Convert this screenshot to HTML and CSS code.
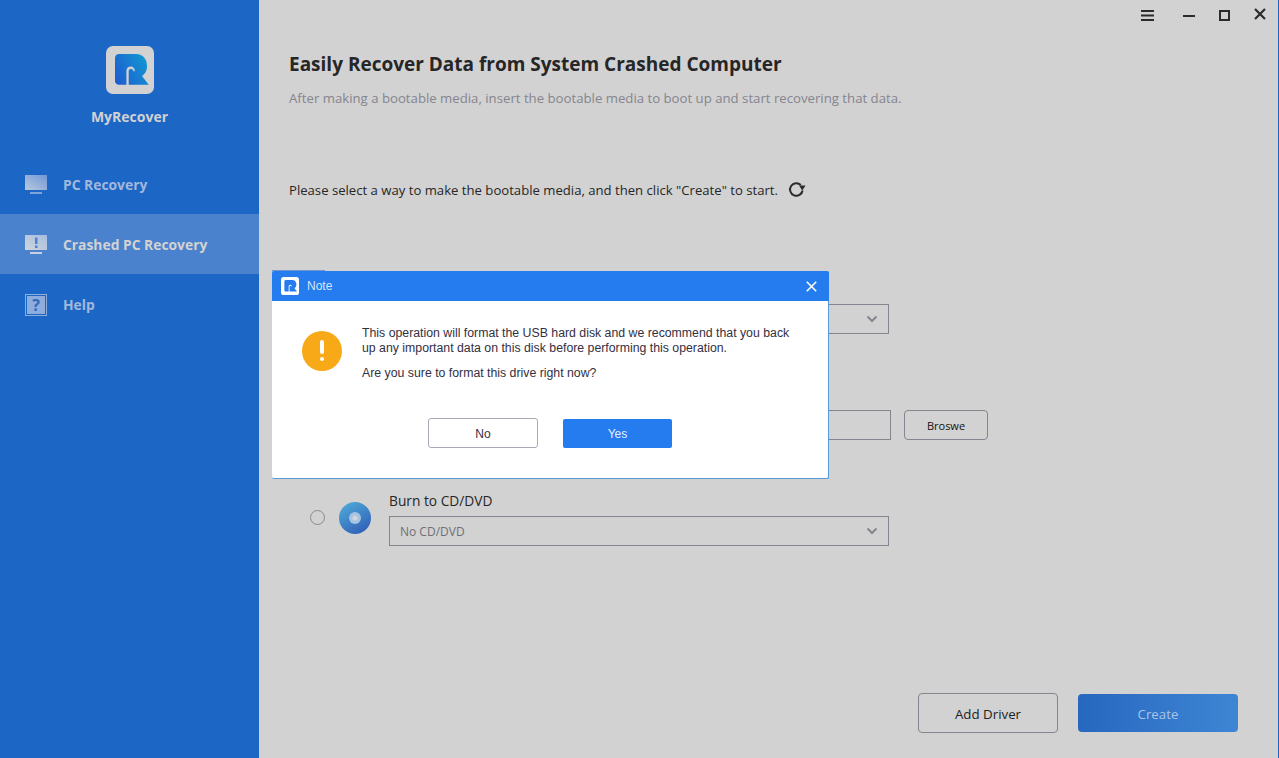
FILE: index.html
```html
<!DOCTYPE html>
<html lang="en">
<head>
<meta charset="utf-8">
<title>MyRecover</title>
<link rel="stylesheet" href="styles.css">
</head>
<body>
<div class="app">
  <aside class="sidebar">
    <div class="brand">
      <div class="logo">
        <svg width="48" height="48" viewBox="0 0 48 48">
          <defs><linearGradient id="lg" x1="0" y1="0.7" x2="1" y2="0.2"><stop offset="0" stop-color="#1d5fd0"/><stop offset="1" stop-color="#1199d2"/></linearGradient></defs>
          <path d="M13 8H30C37 8 41 13 41 20C41 25 39 28 36 30L42.700 38.700H22.700V25C22.700 23.500 24 23 25 23C26.500 23 27.500 24 27.700 25.500L29 25C28.500 22 27 20.500 25 20.500C22 20.500 20.400 22.500 20.400 25V38.700H13C10.500 38.700 9 37 9 35V12C9 9.500 11 8 13 8Z" fill="url(#lg)"/>
        </svg>
      </div>
      <div class="brand-name">MyRecover</div>
    </div>
    <nav class="nav">
      <div class="nav-item">
        <svg class="nav-icon" width="22" height="20" viewBox="0 0 22 20"><defs><linearGradient id="ng" x1="0" y1="1" x2="1" y2="0"><stop offset="0" stop-color="#b9c9de"/><stop offset="1" stop-color="#6f97d6"/></linearGradient></defs><rect y="0" width="22" height="15" fill="url(#ng)"/><rect x="5" y="17" width="12" height="2" fill="#7fa5dc"/></svg>
        <span>PC Recovery</span>
      </div>
      <div class="nav-item active">
        <svg class="nav-icon" width="22" height="20" viewBox="0 0 22 20"><defs><linearGradient id="ag" x1="0" y1="1" x2="1" y2="0"><stop offset="0" stop-color="#d0d5dc"/><stop offset="1" stop-color="#a5bde0"/></linearGradient></defs><rect y="0" width="22" height="15" fill="url(#ag)"/><rect x="10" y="2.500" width="2.500" height="6.500" fill="#4f82cd"/><rect x="10" y="10.500" width="2.500" height="2.500" fill="#4f82cd"/><rect x="5" y="17" width="12" height="2" fill="#c5d1e2"/></svg>
        <span>Crashed PC Recovery</span>
      </div>
      <div class="nav-item">
        <svg class="nav-icon" width="22" height="22" viewBox="0 0 22 22"><rect x="0.500" y="0.500" width="21" height="21" fill="none" stroke="#8eaddc"/><rect x="2" y="2" width="18" height="18" fill="#8eaddc"/><text class="help-q" x="11" y="17" text-anchor="middle">?</text></svg>
        <span>Help</span>
      </div>
    </nav>
  </aside>

  <main class="main">
    <header class="titlebar">
      <svg class="tb-menu" width="13" height="11" viewBox="0 0 13 11"><path d="M0 1h13M0 5.500h13M0 10h13" stroke="#2b2b2b" stroke-width="2" fill="none"/></svg>
      <svg class="tb-min" width="12" height="11" viewBox="0 0 12 11"><path d="M0 6h12" stroke="#2b2b2b" stroke-width="2" fill="none"/></svg>
      <svg class="tb-max" width="11" height="11" viewBox="0 0 11 11"><rect x="1" y="1" width="9" height="9" stroke="#2b2b2b" stroke-width="2" fill="none"/></svg>
      <svg class="tb-close" width="12" height="12" viewBox="0 0 12 12"><path d="M1 1l10 10M11 1L1 11" stroke="#2b2b2b" stroke-width="2.200" fill="none"/></svg>
    </header>

    <section class="content">
      <h1 class="title">Easily Recover Data from System Crashed Computer</h1>
      <p class="subtitle">After making a bootable media, insert the bootable media to boot up and start recovering that data.</p>
      <div class="prompt">
        <span>Please select a way to make the bootable media, and then click "Create" to start.</span>
        <svg class="refresh" width="18" height="18" viewBox="0 0 18 18"><path d="M12.800 5A6.300 6.300 0 1 0 14.600 10.500" fill="none" stroke="#2b2b2b" stroke-width="2"/><path d="M11 5.500H17.500L14.300 10.500z" fill="#2b2b2b"/></svg>
      </div>

      <div class="options">
        <div class="option">
          <span class="radio"></span>
          <span class="disc-slot"></span>
          <div class="field">
            <div class="label">&nbsp;</div>
            <div class="select"><span></span><svg class="chev" width="12" height="8" viewBox="0 0 12 8"><path d="M1.500 1.500L6 6l4.500-4.500" fill="none" stroke="#85858f" stroke-width="2"/></svg></div>
          </div>
        </div>
        <div class="option">
          <span class="radio"></span>
          <span class="disc-slot"></span>
          <div class="field">
            <div class="label">&nbsp;</div>
            <div class="input-row">
              <div class="input"></div>
              <button class="browse">Broswe</button>
            </div>
          </div>
        </div>
        <div class="option">
          <span class="radio"></span>
          <svg class="disc" width="34" height="34" viewBox="0 0 34 34">
            <defs>
              <linearGradient id="dg" x1="0.200" y1="0" x2="0.800" y2="1"><stop offset="0" stop-color="#4fa9d8"/><stop offset="1" stop-color="#2f5db5"/></linearGradient>
            </defs>
            <circle cx="17" cy="17" r="16" fill="url(#dg)"/>
            <circle cx="17" cy="17" r="6" fill="#a6c4e2"/>
            <circle cx="17" cy="17" r="2.500" fill="#d2d6dc"/>
          </svg>
          <div class="field">
            <div class="label">Burn to CD/DVD</div>
            <div class="select"><span>No CD/DVD</span><svg class="chev" width="12" height="8" viewBox="0 0 12 8"><path d="M1.500 1.500L6 6l4.500-4.500" fill="none" stroke="#85858f" stroke-width="2"/></svg></div>
          </div>
        </div>
      </div>

      <div class="actions">
        <button class="btn-outline">Add Driver</button>
        <button class="btn-create">Create</button>
      </div>
    </section>
  </main>

  <span class="dialog-tab"></span>
  <div class="dialog">
    <div class="dialog-head">
      <svg width="18" height="18" viewBox="0 0 48 48"><rect width="48" height="48" rx="7" fill="#fff"/><path d="M13 8H30C37 8 41 13 41 20C41 25 39 28 36 30L42.700 38.700H22.700V25C22.700 23.500 24 23 25 23C26.500 23 27.500 24 27.700 25.500L29 25C28.500 22 27 20.500 25 20.500C22 20.500 20.400 22.500 20.400 25V38.700H13C10.500 38.700 9 37 9 35V12C9 9.500 11 8 13 8Z" fill="#247cef"/></svg>
      <span class="dialog-title">Note</span>
      <svg class="dialog-close" width="11" height="11" viewBox="0 0 11 11"><path d="M.8.800l9.400 9.400M10.200.800L.8 10.200" stroke="#fff" stroke-width="1.600" fill="none"/></svg>
    </div>
    <div class="dialog-body">
      <div class="warn"><span class="warn-bar"></span><span class="warn-dot"></span></div>
      <div class="dialog-text">
        <p>This operation will format the USB hard disk and we recommend that you back up any important data on this disk before performing this operation.</p>
        <p>Are you sure to format this drive right now?</p>
      </div>
    </div>
    <div class="dialog-actions">
      <button class="dlg-no">No</button>
      <button class="dlg-yes">Yes</button>
    </div>
  </div>
</div>
</body>
</html>
```

FILE: styles.css
```css
* { box-sizing: border-box; }
html, body { margin: 0; padding: 0; height: 100%; }
body { font-family: "Open Sans", sans-serif; background: #d2d2d2; overflow: hidden; }

.app {
  position: relative;
  display: flex;
  width: 1279px;
  height: 758px;
  background: #d2d2d2;
  border-right: 1px solid #1c66c6;
}

.sidebar { width: 259px; flex: none; background: #1c66c6; }
.brand { display: flex; flex-direction: column; align-items: center; padding-top: 46px; height: 154px; }
.logo { width: 48px; height: 48px; border-radius: 7px; background: #d2d2d2; }
.logo svg { display: block; }
.brand-name { margin-top: 13px; font-size: 14px; font-weight: 700; line-height: 20px; color: #d2d2d2; }

.nav-item {
  display: flex;
  align-items: center;
  height: 60px;
  padding: 2px 0 0 25px;
  font-size: 13.850px;
  font-weight: 700;
  color: #a2b8db;
}
.nav-item span { margin: 0 0 2px 16px; }
.nav-item.active { background: #4b82cd; color: #d2d2d2; }
.nav-icon { flex: none; }
.help-q { font-family: "Open Sans", sans-serif; font-size: 16px; font-weight: 700; fill: #2f68bd; }

.main { flex: 1; display: flex; flex-direction: column; min-width: 0; }
.titlebar {
  display: flex;
  align-items: center;
  justify-content: flex-end;
  height: 30px;
  padding: 0 12px 0 0;
}
.tb-min { margin-left: 29px; }
.tb-max { margin-left: 24px; }
.tb-close { margin: -2px 0 0 24px; }

.content { flex: 1; padding: 19px 40px 0 30px; display: flex; flex-direction: column; }
.title { margin: 0; font-size: 19px; line-height: 30px; font-weight: 700; color: #262626; }
.subtitle { margin: 10px 0 0; font-size: 13.200px; line-height: 18px; color: #85858f; }
.prompt { display: flex; align-items: center; gap: 10px; margin-top: 73px; font-size: 13.130px; line-height: 20px; color: #262626; }
.refresh { margin-top: -2px; }

.options { display: flex; flex-direction: column; margin-top: 79px; margin-left: 21px; }
.option { display: flex; align-items: flex-start; height: 106px; }
.radio { flex: none; width: 15px; height: 15px; margin-top: 19px; border: 1px solid #8a8a8a; border-radius: 50%; }
.disc-slot, .disc { flex: none; width: 34px; height: 34px; margin: 10px 0 0 13px; }
.field { margin-left: 17px; width: 599px; }
.label { font-size: 13.750px; line-height: 20px; margin-bottom: 5px; color: #262626; }
.select {
  display: flex; align-items: center; justify-content: space-between;
  width: 500px; height: 30px; padding: 0 10px;
  border: 1px solid #85858f;
  font-size: 12px; color: #6f6f75;
}
.input-row { display: flex; gap: 13px; }
.input { width: 502px; height: 30px; border: 1px solid #85858f; }
.browse {
  width: 84px; height: 30px; padding: 0;
  background: transparent; border: 1px solid #85858f; border-radius: 4px;
  font: 11px "Open Sans", sans-serif; color: #111;
}

.actions { display: flex; align-items: center; justify-content: flex-end; gap: 20px; margin-top: auto; margin-bottom: 25px; }
.btn-outline {
  width: 140px; height: 40px; padding: 1px 0 0;
  background: transparent; border: 1px solid #85858f; border-radius: 4px;
  font: 13.300px "Open Sans", sans-serif; color: #222;
}
.btn-create {
  width: 160px; height: 38px; padding: 1px 0 0;
  border: 0; border-radius: 4px;
  background: linear-gradient(90deg, #2767bf, #3e86d4);
  font: 13.300px "Open Sans", sans-serif; color: #a9c4e6;
}

.dialog-tab { position: absolute; left: 272px; top: 270px; width: 53px; height: 2px; background: #6f97cd; }
.dialog {
  position: absolute; left: 272px; top: 271px;
  width: 557px; height: 208px;
  background: #fff;
  border-right: 1px solid #5b9ad9;
  border-bottom: 1px solid #5b9ad9;
  border-radius: 2px;
  font-family: "Liberation Sans", sans-serif;
  color: #33303f;
}
.dialog-head {
  display: flex; align-items: center;
  height: 30px; margin-right: -1px; padding: 0 12px 0 9px;
  background: #247cef;
  border-radius: 2px 2px 0 0;
}
.dialog-title { margin-left: 8px; font-size: 12px; color: #d7e6fb; }
.dialog-close { margin-left: auto; }
.dialog-body { display: flex; padding: 25px 0 0 30px; }
.warn {
  flex: none; position: relative;
  display: flex; flex-direction: column; align-items: center;
  width: 40px; height: 40px; margin-top: 5px; padding-top: 9px;
  border-radius: 50%; background: #f7a918;
}
.warn-bar { width: 4px; height: 14px; border-radius: 2px; background: #fff; }
.warn-dot { width: 4px; height: 4px; margin-top: 3px; border-radius: 50%; background: #fff; }
.dialog-text { width: 436px; margin-left: 20px; font-size: 12.300px; line-height: 15px; }
.dialog-text p { margin: 0 0 10px; }
.dialog-actions { display: flex; align-items: center; padding-left: 156px; gap: 25px; margin-top: 27px; }
.dlg-no {
  width: 110px; height: 30px; padding: 1px 0 0;
  background: #fff; border: 1px solid #a9a9b5; border-radius: 3px;
  font: 12px "Liberation Sans", sans-serif; color: #33303f;
}
.dlg-yes {
  width: 109px; height: 29px; padding: 1px 0 0;
  background: #247cef; border: 0; border-radius: 2px;
  font: 12px "Liberation Sans", sans-serif; color: #e8f1fd;
}
```
